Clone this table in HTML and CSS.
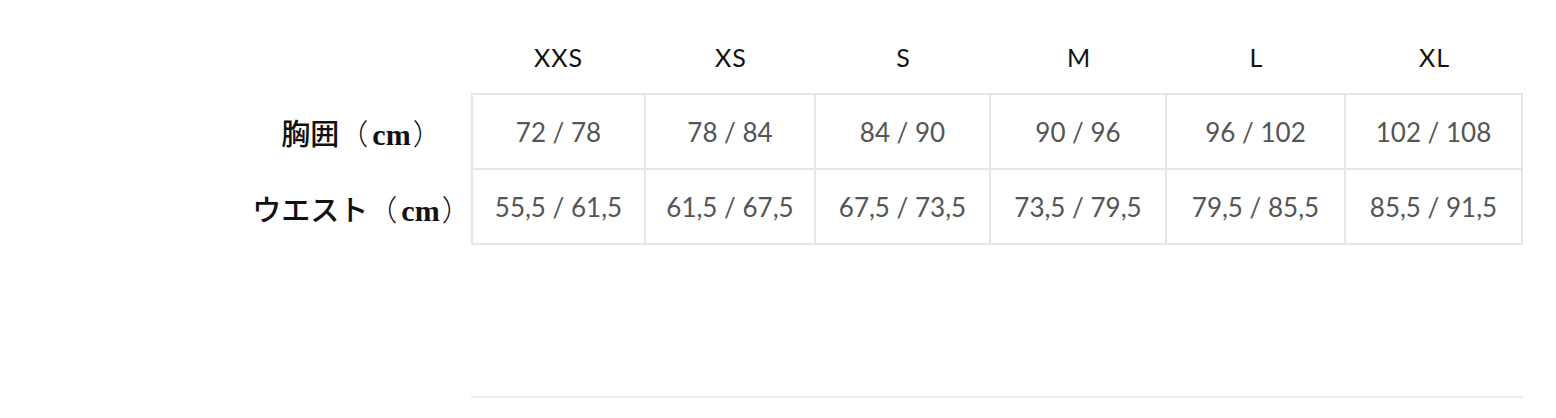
FILE: index.html
```html
<!DOCTYPE html>
<html lang="ja">
<head>
<meta charset="utf-8">
<title>サイズ表</title>
<link rel="stylesheet" href="styles.css">
</head>
<body>
<div class="page">
  <table class="sizes">
    <thead>
      <tr>
        <th class="corner"></th>
        <th class="size">XXS</th>
        <th class="size">XS</th>
        <th class="size">S</th>
        <th class="size">M</th>
        <th class="size">L</th>
        <th class="size">XL</th>
      </tr>
    </thead>
    <tbody>
      <tr class="first">
        <th class="label">胸囲<span class="open">（</span><span class="unit">cm</span><span class="close">）</span></th>
        <td>72 / 78</td>
        <td>78 / 84</td>
        <td>84 / 90</td>
        <td>90 / 96</td>
        <td>96 / 102</td>
        <td>102 / 108</td>
      </tr>
      <tr>
        <th class="label">ウエスト<span class="open">（</span><span class="unit">cm</span><span class="close">）</span></th>
        <td>55,5 / 61,5</td>
        <td>61,5 / 67,5</td>
        <td>67,5 / 73,5</td>
        <td>73,5 / 79,5</td>
        <td>79,5 / 85,5</td>
        <td>85,5 / 91,5</td>
      </tr>
    </tbody>
  </table>
  <div class="rule"></div>
</div>
</body>
</html>
```

FILE: styles.css
```css
html, body {
  margin: 0;
  padding: 0;
  background: #fff;
}

.page {
  padding-top: 20px;
  padding-left: 235px;
}

.sizes {
  border-collapse: separate;
  border-spacing: 0;
  table-layout: fixed;
  width: 1288px;
}

.sizes th,
.sizes td {
  padding: 0;
}

.corner {
  width: 236px;
}

.size {
  height: 73px;
  font-family: "Lato", "Liberation Sans", sans-serif;
  font-weight: 400;
  font-size: 25px;
  letter-spacing: 1px;
  color: #111;
  text-align: center;
  vertical-align: middle;
}

.size:nth-child(2) { width: 175px; }
.size:nth-child(3) { width: 170px; }
.size:nth-child(4) { width: 175px; }
.size:nth-child(5) { width: 176px; }
.size:nth-child(6) { width: 179px; }
.size:nth-child(7) { width: 177px; }

.sizes .label {
  height: 74px;
  text-align: center;
  vertical-align: middle;
  white-space: nowrap;
  font-family: "Noto Sans CJK JP", sans-serif;
  font-weight: 500;
  font-size: 29px;
  color: #111;
}

.open,
.close {
  font-family: "Noto Sans CJK JP", sans-serif;
  font-weight: 300;
}

.open {
  margin-left: 0;
  margin-right: 4px;
}

.close {
  margin-left: 2px;
  margin-right: -17px;
}

.unit {
  font-family: "Liberation Serif", serif;
  font-weight: 700;
  font-size: 30px;
}

.sizes td {
  height: 73px;
  text-align: center;
  vertical-align: middle;
  white-space: nowrap;
  font-family: "Lato", "Liberation Sans", sans-serif;
  font-size: 26px;
  color: #555;
  border-right: 2px solid #e6e6e6;
  border-bottom: 2px solid #e6e6e6;
}

.sizes .label + td {
  border-left: 2px solid #e6e6e6;
}

.first td {
  border-top: 2px solid #e6e6e6;
}

.rule {
  margin-top: 151px;
  margin-left: 236px;
  width: 1052px;
  border-top: 2px solid #ececec;
}
```
